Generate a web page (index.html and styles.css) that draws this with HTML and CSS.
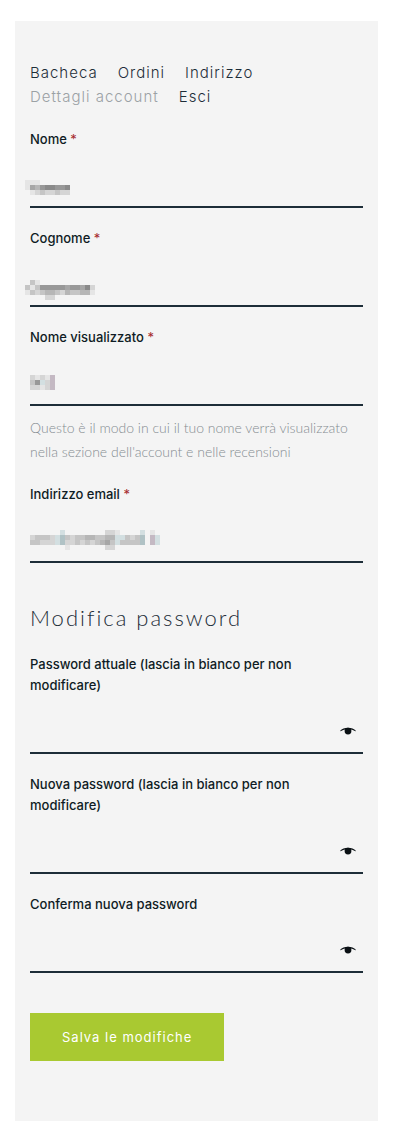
FILE: index.html
```html
<!DOCTYPE html>
<html lang="it">
<head>
  <meta charset="UTF-8">
  <meta name="viewport" content="width=device-width, initial-scale=1">
  <title>Dettagli account</title>
  <link rel="stylesheet" href="styles.css">
</head>
<body>

<svg class="defs" aria-hidden="true">
  <symbol id="eye" viewBox="0 0 16 10">
    <path d="M0 4.9C3.6 0.6 12.4 0.6 16 4.9L15.4 5.3C11.8 2.5 4.2 2.5 0.6 5.3Z" fill="currentColor"/>
    <circle cx="8" cy="5.1" r="3.4" fill="currentColor"/>
  </symbol>
</svg>

<main class="account">
  <nav class="account-nav">
    <a href="#">Bacheca</a>
    <a href="#">Ordini</a>
    <a href="#">Indirizzo</a>
    <a href="#" class="active">Dettagli account</a>
    <a href="#">Esci</a>
  </nav>

  <form class="account-form">
    <div class="field">
      <label for="firstName">Nome <span class="required">*</span></label>
      <div class="control">
        <input type="text" id="firstName" required>
        <svg class="mosaic" data-y="22" data-rows="eee------|eab988998|-edcddcdd" aria-hidden="true"></svg>
      </div>
    </div>

    <div class="field">
      <label for="lastName">Cognome <span class="required">*</span></label>
      <div class="control">
        <input type="text" id="lastName" required>
        <svg class="mosaic" data-y="23" data-rows="-ce-----------|cec99999a99a8d|ecdcbbcdbccbbe|----dd--------" aria-hidden="true"></svg>
      </div>
    </div>

    <div class="field">
      <label for="displayName">Nome visualizzato <span class="required">*</span></label>
      <div class="control">
        <input type="text" id="displayName" required>
        <svg class="mosaic" data-y="19" data-rows="-dedep|-c9sdp|-ddedp" aria-hidden="true"></svg>
      </div>
      <p class="hint">Questo è il modo in cui il tuo nome verrà visualizzato nella sezione dell'account e nelle recensioni</p>
    </div>

    <div class="field">
      <label for="email">Indirizzo email <span class="required">*</span></label>
      <div class="control">
        <input type="email" id="email" required>
        <svg class="mosaic" data-y="17" data-rows="-------s--------dde----s-e-|-dcccdstcdccbbccbbsscdct-ps|-ccdddstddcdcdcbacscccct-ps|--------e-------dd---------" aria-hidden="true"></svg>
      </div>
    </div>

    <h2>Modifica password</h2>

    <div class="field">
      <label for="currentPassword">Password attuale (lascia in bianco per non modificare)</label>
      <div class="control">
        <input type="password" id="currentPassword">
        <button type="button" class="toggle" aria-label="Mostra password"><svg><use href="#eye"/></svg></button>
      </div>
    </div>

    <div class="field">
      <label for="newPassword">Nuova password (lascia in bianco per non modificare)</label>
      <div class="control">
        <input type="password" id="newPassword">
        <button type="button" class="toggle" aria-label="Mostra password"><svg><use href="#eye"/></svg></button>
      </div>
    </div>

    <div class="field">
      <label for="confirmPassword">Conferma nuova password</label>
      <div class="control">
        <input type="password" id="confirmPassword">
        <button type="button" class="toggle" aria-label="Mostra password"><svg><use href="#eye"/></svg></button>
      </div>
    </div>

    <button type="submit" class="save">Salva le modifiche</button>
  </form>
</main>

<script>
  // one letter per 5px block that hides the personal data
  const colors = {
    "8": "#8a8a8a", "9": "#989898", a: "#a6a6a6", b: "#b6b6b6", c: "#c5c5c5",
    d: "#d5d5d5", e: "#e5e5e5", s: "#d3dfe1", t: "#b0c2c5", p: "#c4b9c3"
  };

  document.querySelectorAll(".mosaic").forEach(function(svg) {
    const top = Number(svg.dataset.y);
    svg.dataset.rows.split("|").forEach(function(row, y) {
      row.split("").forEach(function(key, x) {
        if (!colors[key]) return;
        const block = document.createElementNS("http://www.w3.org/2000/svg", "rect");
        block.setAttribute("x", x * 5);
        block.setAttribute("y", top + y * 5);
        block.setAttribute("width", 5);
        block.setAttribute("height", 5);
        block.setAttribute("fill", colors[key]);
        svg.appendChild(block);
      });
    });
  });

  document.querySelectorAll(".toggle").forEach(function(btn) {
    btn.onclick = function() {
      const input = btn.previousElementSibling;
      input.type = input.type === "password" ? "text" : "password";
    };
  });
</script>

</body>
</html>
```

FILE: styles.css
```css
* {
  box-sizing: border-box;
}
body {
  margin: 0;
  padding: 21px 25px 20px 15px;
  background: #fff;
  color: #0f1c24;
  font-family: Inter, "Open Sans", sans-serif;
}
.defs {
  display: none;
}
.account {
  padding: 40px 15px 60px;
  background: #f4f4f4;
}
.account-nav {
  display: flex;
  flex-wrap: wrap;
  column-gap: 20px;
  margin-bottom: 20px;
}
.account-nav a {
  color: #1d2d38;
  font-size: 15px;
  font-weight: 300;
  line-height: 24px;
  letter-spacing: 1px;
  text-decoration: none;
}
.account-nav .active {
  color: #9ba1a5;
}
.field {
  margin-bottom: 20px;
}
label {
  display: block;
  font-size: 13px;
  font-weight: 500;
  line-height: 21px;
}
.required {
  color: #a5282c;
  font-weight: 400;
}
.control {
  position: relative;
  margin-top: 8px;
}
input {
  display: block;
  width: 100%;
  height: 50px;
  padding: 0;
  border: none;
  border-bottom: 2px solid #1d2d38;
  background: transparent;
  font: inherit;
  font-size: 14px;
  outline: none;
}
.mosaic {
  position: absolute;
  top: 0;
  left: -5px;
  width: 140px;
  height: 45px;
  pointer-events: none;
}
.hint {
  margin: 10px 0 0;
  color: #858c92;
  font-family: Lato, sans-serif;
  font-size: 14px;
  font-weight: 300;
  line-height: 24px;
}
h2 {
  margin: 40px 0 21px;
  color: #1d2d38;
  font-family: Lato, sans-serif;
  font-size: 22px;
  font-weight: 300;
  line-height: 30px;
  letter-spacing: 2px;
}
.toggle {
  position: absolute;
  top: 18px;
  right: 7px;
  padding: 4px 0;
  border: none;
  background: none;
  color: #0a1014;
  cursor: pointer;
}
.toggle svg {
  display: block;
  width: 16px;
  height: 10px;
}
.save {
  margin-top: 20px;
  padding: 12px 32px;
  border: none;
  background: #a9c931;
  color: #fff;
  font-family: inherit;
  font-size: 13px;
  line-height: 24px;
  letter-spacing: 1px;
  cursor: pointer;
}
```
